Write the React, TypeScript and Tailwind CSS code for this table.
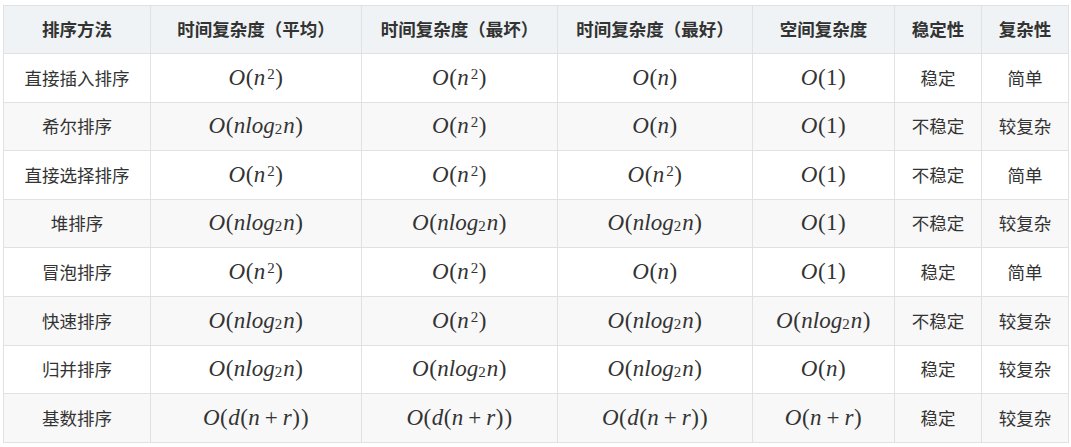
const cjk = "font-['Noto_Sans_CJK_SC',sans-serif]";

type Cell = string;

function Sym({ c }: { c: string }) {
  // italic letters, upright digits / parens / plus
  if (/[a-zA-Z]/.test(c)) return <i>{c}</i>;
  if (c === "+") return <span className="mx-[5px] not-italic">+</span>;
  if (c === "(" || c === ")") return <span className="not-italic mx-[0.5px]">{c}</span>;
  return <span className="not-italic">{c}</span>;
}

function Math({ expr }: { expr: string }) {
  // tokens: ^2 -> superscript, _2 -> subscript
  const parts: React.ReactNode[] = [];
  let i = 0;
  let k = 0;
  while (i < expr.length) {
    const c = expr[i];
    if (c === "^" || c === "_") {
      const d = expr[i + 1];
      parts.push(
        c === "^" ? (
          <sup key={k++} className="text-[15px] not-italic relative -top-[6px] ml-[2px]">
            {d}
          </sup>
        ) : (
          <sub key={k++} className="text-[15px] not-italic relative top-[1px] mr-[1px]">
            {d}
          </sub>
        )
      );
      i += 2;
    } else if (c === " ") {
      i++;
    } else {
      parts.push(<Sym key={k++} c={c} />);
      i++;
    }
  }
  return (
    <span className="font-['Liberation_Serif','DejaVu_Serif',serif] text-[23px] leading-none text-[#333]">
      {parts}
    </span>
  );
}

const head = ["排序方法", "时间复杂度（平均）", "时间复杂度（最坏）", "时间复杂度（最好）", "空间复杂度", "稳定性", "复杂性"];
const widths = ["w-[147px]", "w-[211px]", "w-[196px]", "w-[195px]", "w-[142px]", "w-[87px]", "w-[87px]"];

const rows: Cell[][] = [
  ["直接插入排序", "O(n^2)", "O(n^2)", "O(n)", "O(1)", "稳定", "简单"],
  ["希尔排序", "O(nlog_2n)", "O(n^2)", "O(n)", "O(1)", "不稳定", "较复杂"],
  ["直接选择排序", "O(n^2)", "O(n^2)", "O(n^2)", "O(1)", "不稳定", "简单"],
  ["堆排序", "O(nlog_2n)", "O(nlog_2n)", "O(nlog_2n)", "O(1)", "不稳定", "较复杂"],
  ["冒泡排序", "O(n^2)", "O(n^2)", "O(n)", "O(1)", "稳定", "简单"],
  ["快速排序", "O(nlog_2n)", "O(n^2)", "O(nlog_2n)", "O(nlog_2n)", "不稳定", "较复杂"],
  ["归并排序", "O(nlog_2n)", "O(nlog_2n)", "O(nlog_2n)", "O(n)", "稳定", "较复杂"],
  ["基数排序", "O(d(n + r))", "O(d(n + r))", "O(d(n + r))", "O(n + r)", "稳定", "较复杂"],
];

export default function App() {
  return (
    <div className="bg-white w-[1071px] h-[447px] pt-[5px] pl-[3px]">
      <table className={`border-collapse table-fixed w-[1065px] text-[#333] ${cjk}`}>
        <thead>
          <tr className="bg-[#eff3f5] h-[48px]">
            {head.map((h, i) => (
              <th key={i} className={`${widths[i]} border border-[#dfe2e5] text-[17.5px] font-bold text-center px-1`}>
                {h}
              </th>
            ))}
          </tr>
        </thead>
        <tbody>
          {rows.map((r, ri) => (
            <tr key={ri} className={`h-[48.6px] ${ri % 2 === 1 ? "bg-[#f8f8f8]" : "bg-white"}`}>
              {r.map((c, ci) => (
                <td key={ci} className="border border-[#dfe2e5] text-center text-[17.5px] px-1">
                  {ci === 0 || ci >= 5 ? c : <Math expr={c} />}
                </td>
              ))}
            </tr>
          ))}
        </tbody>
      </table>
    </div>
  );
}
